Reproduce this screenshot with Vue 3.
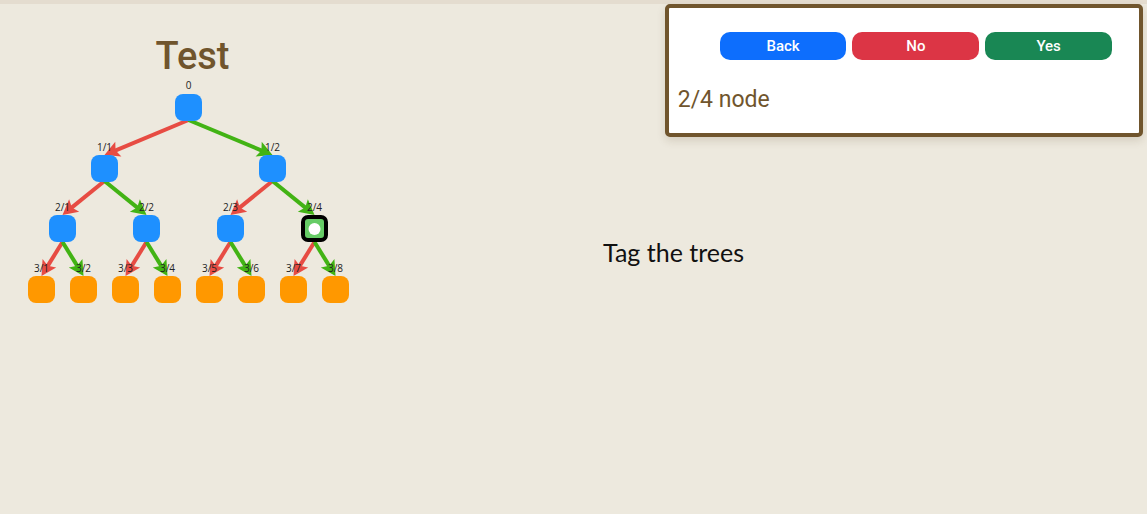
<script setup>
const SIZE = 27
const rows = [
  { y: 94, labelY: 89, first: 188, step: 0 },
  { y: 155, labelY: 151, first: 104, step: 168 },
  { y: 215, labelY: 211, first: 62, step: 84 },
  { y: 276, labelY: 272, first: 41, step: 42 },
]

const nodes = []
const edges = []
rows.forEach((row, level) => {
  for (let i = 0; i < 2 ** level; i++) {
    const x = row.first + row.step * i
    nodes.push({
      id: level ? `${level}/${i + 1}` : '0',
      x,
      y: row.y,
      labelY: row.labelY,
      kind: level === 3 ? 'leaf' : level === 2 && i === 3 ? 'current' : 'inner',
    })
    if (level) {
      const up = rows[level - 1]
      const px = up.first + up.step * Math.floor(i / 2)
      const py = up.y + SIZE - (level === 3 ? 0 : 1)
      const length = Math.hypot(x - px, row.y - py)
      const angle = (Math.atan2(row.y - py, x - px) * 180) / Math.PI
      edges.push({
        id: `${level}/${i + 1}`,
        no: i % 2 === 0,
        length,
        transform: `translate(${px + 0.5} ${py}) rotate(${angle})`,
      })
    }
  }
})

const actions = [
  { label: 'Back', kind: 'back' },
  { label: 'No', kind: 'no' },
  { label: 'Yes', kind: 'yes' },
]
</script>

<template>
  <div class="page">
    <section class="tree">
      <h1>Test</h1>
      <svg class="graph" viewBox="0 76 385 234" role="img" aria-label="Decision tree">
        <g v-for="e in edges" :key="e.id" :transform="e.transform" :class="e.no ? 'edge-no' : 'edge-yes'">
          <path :d="`M0 -2H${e.length - 9}V2H0Z`" />
          <path :d="`M${e.length} 0l-15 -8l3 8l-3 8Z`" />
        </g>
        <g v-for="n in nodes" :key="n.id">
          <template v-if="n.kind === 'current'">
            <rect class="current" :x="n.x - 11" :y="n.y + 2" width="23" height="23" rx="5" />
            <circle class="dot" :cx="n.x + 0.5" :cy="n.y + 14" r="6" />
          </template>
          <rect v-else :class="n.kind" :x="n.x - 13" :y="n.y" :width="SIZE" :height="SIZE" rx="8" />
          <text :x="n.x + 0.5" :y="n.labelY">{{ n.id }}</text>
        </g>
      </svg>
    </section>

    <main class="workspace">
      <section class="panel">
        <div class="actions">
          <button v-for="a in actions" :key="a.label" type="button" :class="a.kind">{{ a.label }}</button>
        </div>
        <p class="status">2/4 node</p>
      </section>
      <p class="task">Tag the trees</p>
    </main>
  </div>
</template>

<style>
body {
  margin: 0;
  background: #ede9de;
}
</style>

<style scoped>
.page {
  box-sizing: border-box;
  display: flex;
  min-height: 100vh;
  border-top: 4px solid #e4dccf;
  background: #ede9de;
  color: #70552d;
  font-family: Roboto, sans-serif;
}

.tree {
  flex: none;
  width: 385px;
  padding-top: 32px;
}

h1 {
  margin: 0;
  font-size: 38px;
  font-weight: 500;
  line-height: 40px;
  text-align: center;
}

.graph {
  display: block;
  width: 100%;
}

.inner {
  fill: #1e90ff;
}

.leaf {
  fill: #ff9800;
}

.current {
  fill: #66cc66;
  stroke: #000;
  stroke-width: 4px;
}

.dot {
  fill: #fff;
}

.edge-no {
  fill: #e74c43;
}

.edge-yes {
  fill: #42b314;
}

.graph text {
  fill: #222;
  font-family: "Open Sans", sans-serif;
  font-size: 10px;
  font-weight: 500;
  text-anchor: middle;
}

.workspace {
  display: flex;
  flex: 1;
  flex-direction: column;
}

.panel {
  box-sizing: border-box;
  align-self: flex-end;
  width: 41.7vw;
  margin-right: 4px;
  padding: 24px 9px 19px;
  border: 4px solid #70552d;
  border-radius: 5px;
  background: #fff;
  box-shadow: 0 4px 8px rgba(80, 60, 30, 0.15);
}

.actions {
  display: flex;
  gap: 6px;
  padding: 0 18px 0 42px;
}

button {
  flex: 1;
  height: 28px;
  padding: 0;
  border: 0;
  border-radius: 10px;
  color: #fff;
  font: 500 15px/28px Roboto, sans-serif;
}

.back {
  background: #0d6efd;
}

.no {
  background: #dc3545;
}

.yes {
  background: #198754;
}

.status {
  margin: 26px 0 0;
  font-size: 23px;
  line-height: 28px;
}

.task {
  margin: 100px 0 0 218px;
  color: #111;
  font-family: Lato, sans-serif;
  font-size: 25px;
  line-height: 30px;
}
</style>
